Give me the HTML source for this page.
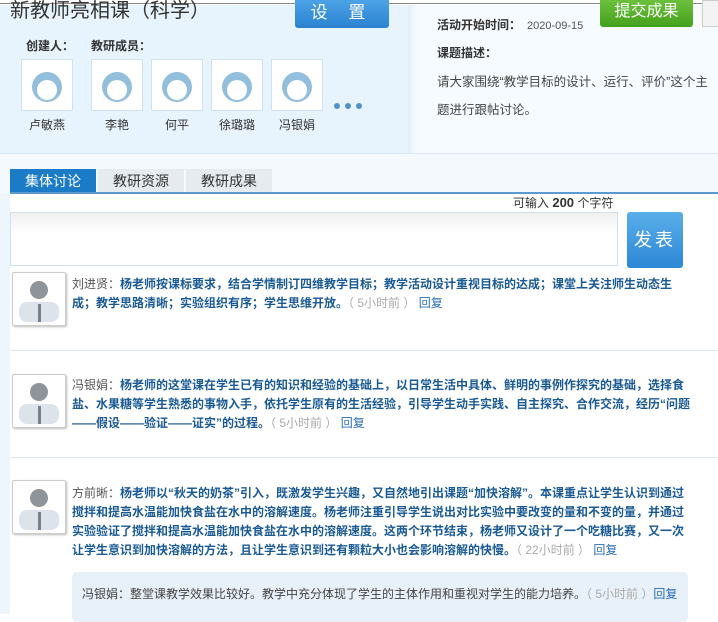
<!DOCTYPE html>
<html><head><meta charset="utf-8"><style>
*{margin:0;padding:0;box-sizing:border-box}
body{width:718px;height:614px;overflow:hidden;background:#fff;font-family:"Liberation Sans","Noto Sans CJK SC",sans-serif;font-size:12px;color:#333;position:relative}
.a{position:absolute}
.av{position:absolute;width:52px;height:52px;background:#fff;border:1px solid #cfe2f0}
.nm{position:absolute;width:60px;text-align:center;font-size:12px;color:#333}
.cm{position:absolute;left:72px;width:618px;line-height:19px;font-size:12px;color:#555}
.cm b{color:#1a5a94}
.g{color:#aaa}.r{color:#2a6db5}
.pa{position:absolute;left:12px;width:54px;height:54px;background:#fff;border:1px solid #ccc;box-shadow:1px 1px 2px #bbb;border-radius:2px}
</style></head><body>
<div class="a" style="left:0;top:0;width:718px;height:4px;background:#fff;border-bottom:1px solid #888"></div>
<div class="a" style="left:0;top:5px;width:410px;height:148px;background:#e8f4fd"></div>
<div class="a" style="left:408px;top:5px;width:310px;height:148px;background:#f5fbff;box-shadow:inset 8px 0 8px -6px #d5e6f3"></div>
<div class="a" style="left:0;top:153px;width:718px;height:40px;background:#f4f9fd;border-top:1px solid #dde8f0"></div>
<div class="a" style="left:0;top:193px;width:10px;height:421px;background:#eef6fd"></div>
<div class="a" style="left:10px;top:-6px;font-size:20px;color:#333">新教师亮相课（科学）</div>
<div class="a" style="left:295px;top:0;width:94px;height:28px;background:linear-gradient(#4da3e6,#2a82d0);border-radius:0 0 3px 3px;color:#fff;font-size:17px;text-align:center;line-height:26px;letter-spacing:8px">设 置</div>
<div class="a" style="left:26px;top:37px;font-weight:bold">创建人：</div>
<div class="a" style="left:91px;top:37px;font-weight:bold">教研成员：</div>
<div class="av" style="left:21px;top:59px"></div><div class="av" style="left:91px;top:59px"></div><div class="av" style="left:151px;top:59px"></div><div class="av" style="left:211px;top:59px"></div><div class="av" style="left:271px;top:59px"></div>
<svg class="a" style="left:0;top:0" width="380" height="120">
<g fill="#93bfdc"><circle cx="47" cy="87" r="15"/><circle cx="117" cy="87" r="15"/><circle cx="177" cy="87" r="15"/><circle cx="237" cy="87" r="15"/><circle cx="297" cy="87" r="15"/></g>
<g fill="#fff"><circle cx="47" cy="90" r="10"/><circle cx="117" cy="90" r="10"/><circle cx="177" cy="90" r="10"/><circle cx="237" cy="90" r="10"/><circle cx="297" cy="90" r="10"/></g>
<g fill="#4f93c9"><circle cx="337" cy="106" r="3"/><circle cx="348" cy="106" r="3"/><circle cx="359" cy="106" r="3"/></g>
</svg>
<div class="nm" style="left:17px;top:116px">卢敏燕</div><div class="nm" style="left:87px;top:116px">李艳</div><div class="nm" style="left:147px;top:116px">何平</div><div class="nm" style="left:207px;top:116px">徐璐璐</div><div class="nm" style="left:267px;top:116px">冯银娟</div>
<div class="a" style="left:437px;top:16px;font-weight:bold">活动开始时间：<span style="font-weight:normal;font-size:11px;color:#555;margin-left:6px">2020-09-15</span></div>
<div class="a" style="left:600px;top:0;width:93px;height:27px;background:linear-gradient(#6cc13c,#44a01c);border-radius:0 0 3px 3px;color:#fff;font-size:16px;text-align:center;line-height:24px">提交成果</div>
<div class="a" style="left:702px;top:0;width:20px;height:27px;background:#f3f3f3;border:1px solid #ccc"></div>
<div class="a" style="left:437px;top:44px;font-weight:bold">课题描述：</div>
<div class="a" style="left:437px;top:68px;width:278px;line-height:28px;color:#444;font-size:12.5px">请大家围绕“教学目标的设计、运行、评价”这个主题进行跟帖讨论。</div>
<div class="a" style="left:10px;top:169px;width:86px;height:24px;background:#1b7bc6;color:#fff;font-size:14px;text-align:center;line-height:24px">集体讨论</div>
<div class="a" style="left:98px;top:169px;width:86px;height:24px;background:#e6ebef;font-size:14px;text-align:center;line-height:24px">教研资源</div>
<div class="a" style="left:186px;top:169px;width:86px;height:24px;background:#e6ebef;font-size:14px;text-align:center;line-height:24px">教研成果</div>
<div class="a" style="left:10px;top:192px;width:708px;height:2px;background:#5b9bd0"></div>
<div class="a" style="left:513px;top:194px;font-size:12px">可输入 <b style="font-size:13px">200</b> 个字符</div>
<div class="a" style="left:10px;top:212px;width:608px;height:54px;border:1px solid #cfe0ee;background:linear-gradient(#f0f0f0,#fff 40%)"></div>
<div class="a" style="left:627px;top:212px;width:56px;height:56px;background:linear-gradient(#5aaee9,#2c87d6);border-radius:3px;color:#fff;font-size:18px;text-align:center;line-height:56px;letter-spacing:3px">发表</div>
<div class="a" style="left:10px;top:350px;width:708px;height:1px;background:#dce8f2"></div>
<div class="a" style="left:10px;top:457px;width:708px;height:1px;background:#dce8f2"></div>
<div class="pa" style="top:272px"></div><div class="pa" style="top:374px"></div><div class="pa" style="top:480px"></div>
<svg class="a" style="left:0;top:0" width="80" height="540"><g fill="#8e949a"><circle cx="39" cy="290" r="9"/><circle cx="39" cy="392" r="9"/><circle cx="39" cy="498" r="9"/></g><g fill="#dde3ea"><rect x="19" y="302" width="40" height="20" rx="8"/><rect x="19" y="404" width="40" height="20" rx="8"/><rect x="19" y="510" width="40" height="20" rx="8"/></g><g fill="#7a7f85"><rect x="38" y="304" width="3" height="18"/><rect x="38" y="406" width="3" height="18"/><rect x="38" y="512" width="3" height="18"/></g></svg>
<div class="cm" style="top:275px">刘进贤：<b>杨老师按课标要求，结合学情制订四维教学目标；教学活动设计重视目标的达成；课堂上关注师生动态生成；教学思路清晰；实验组织有序；学生思维开放。</b><span class="g">（ 5小时前 ）</span> <span class="r">回复</span></div>
<div class="cm" style="top:376px">冯银娟：<b>杨老师的这堂课在学生已有的知识和经验的基础上，以日常生活中具体、鲜明的事例作探究的基础，选择食盐、水果糖等学生熟悉的事物入手，依托学生原有的生活经验，引导学生动手实践、自主探究、合作交流，经历“问题——假设——验证——证实”的过程。</b><span class="g">（ 5小时前 ）</span> <span class="r">回复</span></div>
<div class="cm" style="top:484px">方前晰：<b>杨老师以“秋天的奶茶”引入，既激发学生兴趣，又自然地引出课题“加快溶解”。本课重点让学生认识到通过搅拌和提高水温能加快食盐在水中的溶解速度。杨老师注重引导学生说出对比实验中要改变的量和不变的量，并通过实验验证了搅拌和提高水温能加快食盐在水中的溶解速度。这两个环节结束，杨老师又设计了一个吃糖比赛，又一次让学生意识到加快溶解的方法，且让学生意识到还有颗粒大小也会影响溶解的快慢。</b><span class="g">（ 22小时前 ）</span> <span class="r">回复</span></div>
<div class="a" style="left:72px;top:572px;width:616px;height:50px;background:#e8f0f9;border-radius:5px;padding:12px 10px;line-height:20px;color:#444">冯银娟：整堂课教学效果比较好。教学中充分体现了学生的主体作用和重视对学生的能力培养。<span class="g">（ 5小时前 ）</span><span class="r">回复</span></div>
</body></html>
